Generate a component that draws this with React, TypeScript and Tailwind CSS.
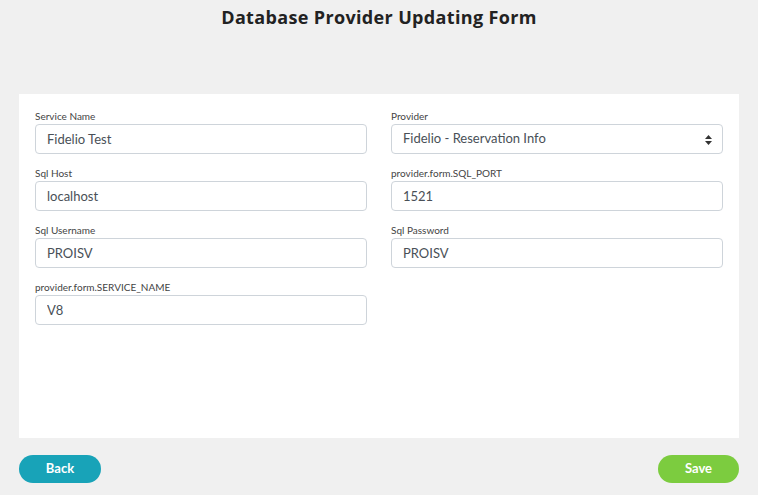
import { useState } from "react";

const Field = ({ label, value }: { label: string; value: string }) => {
  const [val, setVal] = useState(value);
  return (
    <label className="flex flex-col gap-[2px]">
      <span className="text-[10px] leading-[12px] text-[#444]">{label}</span>
      <input
        type="text"
        value={val}
        onChange={(e) => setVal(e.target.value)}
        className="h-[30px] border border-[#ced4da] rounded-[4px] px-[11px] text-[13px] text-[#495057] bg-white outline-none"
      />
    </label>
  );
};

const App = () => {
  return (
    <div
      className="w-[758px] h-[495px] bg-[#f0f0f0] flex flex-col px-[19px]"
      style={{ fontFamily: "Lato, 'Open Sans', sans-serif" }}
    >
      <h1
        className="h-[35px] pt-[6px] text-center text-[18px] leading-[22px] font-bold text-[#222] tracking-[0.35px]"
        style={{ fontFamily: "'Open Sans', sans-serif" }}
      >
        Database Provider Updating Form
      </h1>
      <div className="mt-[59px] h-[344px] bg-white px-[16px] pt-[16px]">
        <div className="grid grid-cols-2 gap-x-[24px] gap-y-[13px]">
          <Field label="Service Name" value="Fidelio Test" />
          <label className="flex flex-col gap-[2px]">
            <span className="text-[10px] leading-[12px] text-[#444]">Provider</span>
            <div className="relative h-[30px] border border-[#ced4da] rounded-[4px] bg-white flex items-center px-[11px] text-[13px] text-[#495057]">
              Fidelio - Reservation Info
              <svg className="absolute right-[10px] top-[10px]" width="7" height="10" viewBox="0 0 7 10">
                <path d="M3.5 0L7 4H0z" fill="#333" />
                <path d="M3.5 10L0 6h7z" fill="#333" />
              </svg>
            </div>
          </label>
          <Field label="Sql Host" value="localhost" />
          <Field label="provider.form.SQL_PORT" value="1521" />
          <Field label="Sql Username" value="PROISV" />
          <Field label="Sql Password" value="PROISV" />
          <Field label="provider.form.SERVICE_NAME" value="V8" />
        </div>
      </div>
      <div className="mt-[17px] flex justify-between">
        <button className="w-[82px] h-[28px] rounded-full bg-[#18a3b8] text-white text-[13px] font-bold">
          Back
        </button>
        <button className="w-[81px] h-[28px] rounded-full bg-[#7ccc3f] text-white text-[13px] font-bold">
          Save
        </button>
      </div>
    </div>
  );
};

export default App;
